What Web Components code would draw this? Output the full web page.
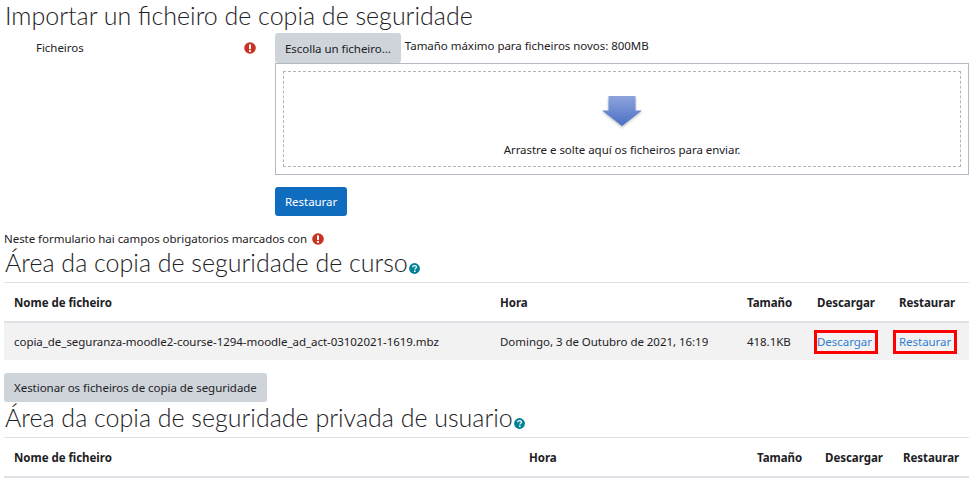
<!DOCTYPE html>
<html lang="gl">
<head>
<meta charset="utf-8">
<title>Importar un ficheiro de copia de seguridade</title>
<style>
html, body { margin: 0; background: #fff; }
body {
  height: 482px;
  overflow: hidden;
  font-family: "Noto Sans", "Open Sans", sans-serif;
  font-size: 11.5px;
  letter-spacing: -0.04px;
  color: #1d2125;
}
</style>
</head>
<body>
<backup-page></backup-page>

<script>
const ICON_REQUIRED = `<svg width="12" height="12" viewBox="0 0 12 12" aria-hidden="true">
  <circle cx="6" cy="6" r="5.8" fill="#ca3120"/>
  <rect x="5" y="2.2" width="2" height="4.9" rx=".6" fill="#fff"/>
  <circle cx="6" cy="8.9" r="1.15" fill="#fff"/>
</svg>`;

const ICON_HELP = `<svg width="11" height="11" viewBox="0 0 11 11" aria-hidden="true">
  <circle cx="5.5" cy="5.5" r="5.4" fill="#008196"/>
  <path d="M3.6 4.3C3.7 3.2 4.5 2.6 5.6 2.6c1.1 0 1.9.6 1.9 1.5 0 .8-.5 1.1-1 1.4-.4.3-.6.5-.6 1" fill="none" stroke="#fff" stroke-width="1.3"/>
  <circle cx="5.8" cy="8.2" r=".85" fill="#fff"/>
</svg>`;

class MoodleButton extends HTMLElement {
  constructor() {
    super();
    this.attachShadow({ mode: "open" });
    this.shadowRoot.innerHTML = `
    <style>
    :host { display: inline-block; }
    button {
      display: block;
      height: var(--btn-height, 29px);
      padding: 0 10px;
      border: 0;
      border-radius: 3px;
      background: #ced4da;
      color: #1d2125;
      font: inherit;
      letter-spacing: inherit;
      white-space: nowrap;
    }
    :host([primary]) button { background: #0f6cbf; color: #fff; }
    </style>
    <button type="button"><slot></slot></button>`;
  }
}
customElements.define("moodle-button", MoodleButton);

class SectionHeading extends HTMLElement {
  constructor() {
    super();
    this.attachShadow({ mode: "open" });
    this.shadowRoot.innerHTML = `
    <style>
    :host {
      display: flex;
      align-items: flex-end;
      height: 30px;
      padding-left: 1px;
      font-family: Lato, "Noto Sans", sans-serif;
      font-size: 25px;
      font-weight: 300;
      letter-spacing: 0;
      line-height: 30px;
      color: #1d2125;
      white-space: nowrap;
    }
    .help { display: none; margin: 0 0 3px 1px; line-height: 0; }
    :host([help]) .help { display: block; }
    </style>
    <slot></slot><span class="help">${ICON_HELP}</span>`;
  }
}
customElements.define("section-heading", SectionHeading);

class FilePicker extends HTMLElement {
  constructor() {
    super();
    this.attachShadow({ mode: "open" });
    this.shadowRoot.innerHTML = `
    <style>
    :host { display: block; }
    .top { display: flex; height: 30px; }
    .limit { margin: 5px 0 0 4px; line-height: 16px; }
    moodle-button { --btn-height: 30px; }
    .drop {
      box-sizing: border-box;
      height: 112px;
      padding: 7px;
      border: 1px solid #b4b8c2;
    }
    .dashed {
      box-sizing: border-box;
      height: 96px;
      padding-top: 23px;
      border: 1px dashed #b5b5b5;
      text-align: center;
    }
    svg { display: block; margin: 0 auto; }
    p { margin: 10px 0 0; line-height: 17px; }
    </style>
    <div class="top">
      <moodle-button>Escolla un ficheiro...</moodle-button>
      <span class="limit">Tamaño máximo para ficheiros novos: 800MB</span>
    </div>
    <div class="drop">
      <div class="dashed">
        <svg width="46" height="36" viewBox="0 0 46 36" aria-hidden="true">
          <defs>
            <linearGradient id="arrow" x1="0" y1="0" x2="0" y2="1">
              <stop offset="0" stop-color="#8fa4dc"/>
              <stop offset="1" stop-color="#4a6fc6"/>
            </linearGradient>
            <filter id="soft" x="-20%" y="-20%" width="140%" height="150%">
              <feGaussianBlur stdDeviation="1"/>
            </filter>
          </defs>
          <path d="M9 3H37V17H43L23 33 3 17H9Z" fill="#9a9a9a" opacity=".55" filter="url(#soft)"/>
          <path d="M9.500 1H36.500V15.500H43L23 31 3 15.500H9.500Z" fill="url(#arrow)"/>
        </svg>
        <p><slot></slot></p>
      </div>
    </div>`;
  }
}
customElements.define("file-picker", FilePicker);

class ImportForm extends HTMLElement {
  constructor() {
    super();
    this.attachShadow({ mode: "open" });
    this.shadowRoot.innerHTML = `
    <style>
    :host { display: block; }
    .row { display: grid; grid-template-columns: 271px 1fr; }
    .label {
      display: flex;
      justify-content: space-between;
      padding: 7px 19px 0 32px;
      line-height: 16px;
    }
    .label span:last-child { line-height: 0; margin-top: 2px; }
    .submit { grid-column: 2; margin-top: 12px; height: 29px; }
    .note { display: flex; align-items: center; gap: 5px; margin-top: 14px; height: 17px; }
    .note span { line-height: 0; }
    </style>
    <div class="row">
      <div class="label"><label>Ficheiros</label><span>${ICON_REQUIRED}</span></div>
      <file-picker>Arrastre e solte aquí os ficheiros para enviar.</file-picker>
      <div class="submit"><moodle-button primary>Restaurar</moodle-button></div>
    </div>
    <div class="note">Neste formulario hai campos obrigatorios marcados con <span>${ICON_REQUIRED}</span></div>`;
  }
}
customElements.define("import-form", ImportForm);

class BackupTable extends HTMLElement {
  constructor() {
    super();
    this.attachShadow({ mode: "open" });
    this.shadowRoot.innerHTML = `
    <style>
    :host { display: block; margin-top: 2px; }
    .head, ::slotted(backup-row) {
      display: grid;
      grid-template-columns: var(--cols);
    }
    .head {
      height: 38px;
      align-items: center;
      border-top: 1px solid #dee2e6;
      border-bottom: 2px solid #dee2e6;
      font-weight: 700;
    }
    .head span { padding-left: 10px; white-space: nowrap; }
    </style>
    <div class="head">
      <span>Nome de ficheiro</span><span>Hora</span><span>Tamaño</span><span>Descargar</span><span>Restaurar</span>
    </div>
    <slot></slot>`;
  }
}
customElements.define("backup-table", BackupTable);

class BackupRow extends HTMLElement {
  constructor() {
    super();
    this.attachShadow({ mode: "open" });
    this.shadowRoot.innerHTML = `
    <style>
    :host {
      height: 37px;
      align-items: center;
      background: #f2f2f2;
      white-space: nowrap;
    }
    ::slotted(*) { padding-left: 10px; }
    </style>
    <slot></slot>`;
  }
}
customElements.define("backup-row", BackupRow);

class MarkedLink extends HTMLElement {
  constructor() {
    super();
    this.attachShadow({ mode: "open" });
    this.shadowRoot.innerHTML = `
    <style>
    :host { display: block; }
    a {
      display: block;
      width: var(--mark-width);
      margin-left: var(--mark-shift, 0);
      padding-left: calc(0px - var(--mark-shift, 0px));
      box-sizing: border-box;
      color: #2f7fd0;
      text-decoration: none;
      line-height: 18px;
      outline: 3px solid #f00;
    }
    </style>
    <a href="#"><slot></slot></a>`;
  }
}
customElements.define("marked-link", MarkedLink);

class BackupPage extends HTMLElement {
  constructor() {
    super();
    this.attachShadow({ mode: "open" });
    this.shadowRoot.innerHTML = `
    <style>
    :host { display: block; padding: 0 5px 0 4px; }
    .manage { margin-top: 13px; }
    backup-table { margin-top: 5px; }
    </style>
    <section-heading>Importar un ficheiro de copia de seguridade</section-heading>
    <div style="height:3px"></div>
    <import-form></import-form>
    <section-heading help>Área da copia de seguridade de curso</section-heading>
    <backup-table style="--cols: 486px 247px 70px 82px 80px">
      <backup-row>
        <span>copia_de_seguranza-moodle2-course-1294-moodle_ad_act-03102021-1619.mbz</span>
        <span>Domingo, 3 de Outubro de 2021, 16:19</span>
        <span>418.1KB</span>
        <marked-link style="--mark-width: 58px">Descargar</marked-link>
        <marked-link style="--mark-width: 58px; --mark-shift: -3px">Restaurar</marked-link>
      </backup-row>
    </backup-table>
    <div class="manage"><moodle-button>Xestionar os ficheiros de copia de seguridade</moodle-button></div>
    <section-heading help>Área da copia de seguridade privada de usuario</section-heading>
    <backup-table style="--cols: 515px 228px 68px 78px 76px"></backup-table>`;
  }
}
customElements.define("backup-page", BackupPage);
</script>
</body>
</html>
